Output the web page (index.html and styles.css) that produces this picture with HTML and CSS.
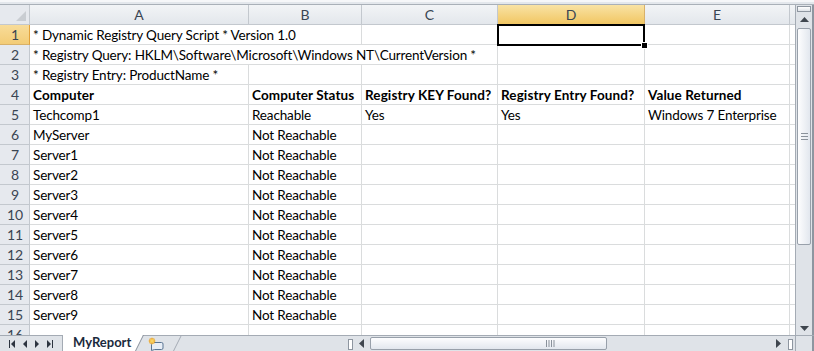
FILE: index.html
```html
<!DOCTYPE html>
<html lang="en">
<head>
    <meta charset="UTF-8">
    <title>MyReport</title>
    <link rel="stylesheet" href="styles.css">
</head>
<body>
    <div class="workbook">
        <div class="top-strip"></div>
        <div class="main">
            <div class="sheet">
                <div class="corner"><svg width="10" height="10" viewBox="0 0 10 10"><path d="M10 0 L10 10 L0 10 Z" fill="#c9cdd2"/></svg></div>
                <div class="col-head">A</div>
                <div class="col-head">B</div>
                <div class="col-head">C</div>
                <div class="col-head active">D</div>
                <div class="col-head">E</div>
                <div class="col-head last"></div>

                <div class="row-head active">1</div>
                <div class="cell span-2">* Dynamic Registry Query Script * Version 1.0</div>
                <div class="cell"></div>
                <div class="cell selected"><span class="sel-box"><span class="fill-handle"></span></span></div>
                <div class="cell"></div>
                <div class="cell last"></div>

                <div class="row-head">2</div>
                <div class="cell span-3">* Registry Query: HKLM\Software\Microsoft\Windows NT\CurrentVersion *</div>
                <div class="cell"></div>
                <div class="cell"></div>
                <div class="cell last"></div>

                <div class="row-head">3</div>
                <div class="cell">* Registry Entry: ProductName *</div>
                <div class="cell"></div>
                <div class="cell"></div>
                <div class="cell"></div>
                <div class="cell"></div>
                <div class="cell last"></div>

                <div class="row-head">4</div>
                <div class="cell bold">Computer</div>
                <div class="cell bold">Computer Status</div>
                <div class="cell bold">Registry KEY Found?</div>
                <div class="cell bold">Registry Entry Found?</div>
                <div class="cell bold">Value Returned</div>
                <div class="cell last"></div>

                <div class="row-head">5</div>
                <div class="cell">Techcomp1</div>
                <div class="cell">Reachable</div>
                <div class="cell">Yes</div>
                <div class="cell">Yes</div>
                <div class="cell">Windows 7 Enterprise</div>
                <div class="cell last"></div>

                <div class="row-head">6</div>
                <div class="cell">MyServer</div>
                <div class="cell">Not Reachable</div>
                <div class="cell"></div><div class="cell"></div><div class="cell"></div><div class="cell last"></div>

                <div class="row-head">7</div>
                <div class="cell">Server1</div>
                <div class="cell">Not Reachable</div>
                <div class="cell"></div><div class="cell"></div><div class="cell"></div><div class="cell last"></div>

                <div class="row-head">8</div>
                <div class="cell">Server2</div>
                <div class="cell">Not Reachable</div>
                <div class="cell"></div><div class="cell"></div><div class="cell"></div><div class="cell last"></div>

                <div class="row-head">9</div>
                <div class="cell">Server3</div>
                <div class="cell">Not Reachable</div>
                <div class="cell"></div><div class="cell"></div><div class="cell"></div><div class="cell last"></div>

                <div class="row-head">10</div>
                <div class="cell">Server4</div>
                <div class="cell">Not Reachable</div>
                <div class="cell"></div><div class="cell"></div><div class="cell"></div><div class="cell last"></div>

                <div class="row-head">11</div>
                <div class="cell">Server5</div>
                <div class="cell">Not Reachable</div>
                <div class="cell"></div><div class="cell"></div><div class="cell"></div><div class="cell last"></div>

                <div class="row-head">12</div>
                <div class="cell">Server6</div>
                <div class="cell">Not Reachable</div>
                <div class="cell"></div><div class="cell"></div><div class="cell"></div><div class="cell last"></div>

                <div class="row-head">13</div>
                <div class="cell">Server7</div>
                <div class="cell">Not Reachable</div>
                <div class="cell"></div><div class="cell"></div><div class="cell"></div><div class="cell last"></div>

                <div class="row-head">14</div>
                <div class="cell">Server8</div>
                <div class="cell">Not Reachable</div>
                <div class="cell"></div><div class="cell"></div><div class="cell"></div><div class="cell last"></div>

                <div class="row-head">15</div>
                <div class="cell">Server9</div>
                <div class="cell">Not Reachable</div>
                <div class="cell"></div><div class="cell"></div><div class="cell"></div><div class="cell last"></div>

                <div class="row-head">16</div>
                <div class="cell"></div><div class="cell"></div><div class="cell"></div><div class="cell"></div><div class="cell"></div><div class="cell last"></div>
            </div>

            <div class="vscroll">
                <div class="split-box"></div>
                <div class="arrow-btn"><svg width="9" height="5" viewBox="0 0 9 5"><path d="M0 5 L4.5 0 L9 5 Z" fill="#3f464e"/></svg></div>
                <div class="vthumb">
                    <svg width="7" height="7" viewBox="0 0 7 7"><path d="M0 .5h7M0 3.5h7M0 6.5h7" stroke="#8a929b" stroke-width="1"/></svg>
                </div>
                <div class="vtrack"></div>
                <div class="arrow-btn"><svg width="9" height="5" viewBox="0 0 9 5"><path d="M0 0 L4.5 5 L9 0 Z" fill="#3f464e"/></svg></div>
            </div>
        </div>

        <div class="tab-bar">
            <div class="nav-buttons">
                <svg width="6" height="8" viewBox="0 0 6 8"><path d="M0 0h1v8H0z M6 0 L2 4 L6 8 Z" fill="#2d3540"/></svg>
                <svg width="4" height="8" viewBox="0 0 4 8"><path d="M4 0 L0 4 L4 8 Z" fill="#2d3540"/></svg>
                <svg width="4" height="8" viewBox="0 0 4 8"><path d="M0 0 L4 4 L0 8 Z" fill="#2d3540"/></svg>
                <svg width="6" height="8" viewBox="0 0 6 8"><path d="M5 0h1v8H5z M0 0 L4 4 L0 8 Z" fill="#2d3540"/></svg>
            </div>
            <div class="sheet-tab">MyReport</div>
            <svg class="tab-slant" width="10" height="16" viewBox="0 0 10 16"><path d="M0 0 H9 L1 16 H0 Z" fill="#fff"/><path d="M9.5 0 L1.5 16" stroke="#8c949e" fill="none"/></svg>
            <div class="new-tab">
                <svg width="16" height="14" viewBox="0 0 16 14">
                    <path d="M4.5 5.5 h9 a1.5 1.5 0 0 1 1.5 1.5 v4 a1.5 1.5 0 0 1 -1.5 1.5 h-7 l-3 1 v-6.5 z" fill="#e8eef6" stroke="#5b7694"/>
                    <circle cx="4" cy="4" r="2.6" fill="#f6c342" stroke="#e08a1e" stroke-width=".8"/>
                    <path d="M4 0v8M0 4h8M1.3 1.3l5.4 5.4M6.7 1.3L1.3 6.7" stroke="#f7d36b" stroke-width=".7"/>
                </svg>
            </div>
            <svg class="tab-slant" width="10" height="16" viewBox="0 0 10 16"><path d="M9.5 0 L1.5 16" stroke="#a4abb4" fill="none"/></svg>
            <div class="tab-fill"></div>
            <div class="hsplit"></div>
            <div class="h-arrow"><svg width="5" height="9" viewBox="0 0 5 9"><path d="M5 0 L0 4.5 L5 9 Z" fill="#3f464e"/></svg></div>
            <div class="hthumb">
                <svg width="9" height="7" viewBox="0 0 9 7"><path d="M.5 0v7M3 0v7M5.5 0v7M8 0v7" stroke="#8a929b" stroke-width="1"/></svg>
            </div>
            <div class="htrack"></div>
            <div class="h-arrow"><svg width="5" height="9" viewBox="0 0 5 9"><path d="M0 0 L5 4.5 L0 9 Z" fill="#3f464e"/></svg></div>
            <div class="hsplit end"></div>
            <div class="scroll-corner"></div>
        </div>
    </div>
</body>
</html>
```
FILE: styles.css
```css
* {
    box-sizing: border-box;
}
body {
    margin: 0;
    font-family: Lato, "Open Sans", sans-serif;
    background: #fff;
}
.workbook {
    width: 814px;
    height: 351px;
    display: flex;
    flex-direction: column;
    overflow: hidden;
    background: #dfe3e8;
}
.top-strip {
    height: 5px;
    flex: none;
    background: #e3e7ec;
    border-top: 2px solid #f6f7f9;
    border-bottom: 1px solid #a9b0b8;
}
.main {
    height: 330px;
    flex: none;
    display: flex;
}
.sheet {
    width: 795px;
    height: 330px;
    overflow: hidden;
    display: grid;
    grid-template-columns: 30px 219px 113px 136px 147px 145px 5px;
    grid-auto-rows: 20px;
    background: #fff;
    font-size: 13.5px;
    letter-spacing: -0.15px;
    color: #000;
}
.corner {
    background: #e6e9ee;
    border-right: 1px solid #c3c8ce;
    border-bottom: 1px solid #c3c8ce;
    display: flex;
    align-items: flex-end;
    justify-content: flex-end;
    padding: 0 3px 3px 0;
}
.col-head {
    background: linear-gradient(#f2f4f6, #e3e7ec);
    border-right: 1px solid #c3c8ce;
    border-bottom: 1px solid #c3c8ce;
    text-align: center;
    line-height: 19px;
    font-size: 14px;
    letter-spacing: 0;
    color: #3a4552;
}
.col-head.active {
    background: linear-gradient(#f9e3a4, #f1c663);
    border-bottom: 1px solid #e2a13a;
    border-right-color: #d8b16a;
}
.col-head.last {
    border-right: none;
}
.row-head {
    background: #e6e9ee;
    border-right: 1px solid #c3c8ce;
    border-bottom: 1px solid #c3c8ce;
    text-align: center;
    line-height: 20px;
    font-size: 14px;
    letter-spacing: 0;
    color: #3a4552;
    padding-left: 1px;
}
.row-head.active {
    background: linear-gradient(#f8dc99, #f3cc76);
    border-right: 1px solid #e2a13a;
    border-bottom-color: #d8b16a;
}
.cell {
    border-right: 1px solid #dadcdd;
    border-bottom: 1px solid #dadcdd;
    padding-left: 3px;
    line-height: 20px;
    white-space: nowrap;
    overflow: hidden;
}
.cell.last {
    border-right: none;
}
.cell.bold {
    font-weight: bold;
    letter-spacing: 0.1px;
}
.span-2 {
    grid-column: span 2;
}
.span-3 {
    grid-column: span 3;
}
.cell.selected {
    position: relative;
    overflow: visible;
}
.sel-box {
    position: absolute;
    top: -1px;
    left: -1px;
    right: -1px;
    bottom: -2px;
    border: 2px solid #000;
    z-index: 2;
}
.fill-handle {
    position: absolute;
    right: -5px;
    bottom: -5px;
    width: 7px;
    height: 7px;
    background: #000;
    border: 1px solid #fff;
}

/* vertical scroll bar */
.vscroll {
    width: 19px;
    flex: none;
    display: flex;
    flex-direction: column;
    align-items: center;
    background: #dfe3e8;
    border-left: 1px solid #a4abb4;
    border-right: 2px solid #8e96a0;
}
.split-box {
    width: 14px;
    height: 6px;
    margin-top: 1px;
    border: 1px solid #8e96a0;
    background: linear-gradient(#fff, #dfe3e8);
    flex: none;
}
.arrow-btn {
    height: 14px;
    width: 100%;
    flex: none;
    display: flex;
    align-items: center;
    justify-content: center;
}
.vthumb {
    height: 217px;
    width: 14px;
    flex: none;
    margin-top: 2px;
    border: 1px solid #98a0aa;
    border-radius: 2px;
    background: linear-gradient(90deg, #fdfdfe, #e2e7ee);
    display: flex;
    align-items: center;
    justify-content: center;
}
.vtrack {
    flex: 1;
}

/* sheet tabs + horizontal scroll bar */
.tab-bar {
    height: 16px;
    flex: none;
    display: flex;
    align-items: stretch;
    border-top: 1px solid #a4abb4;
    background: #dfe3e8;
    font-size: 13px;
}
.nav-buttons {
    width: 63px;
    flex: none;
    display: flex;
    align-items: center;
    gap: 8px;
    padding-left: 9px;
    border-right: 1px solid #a4abb4;
}
.sheet-tab {
    background: #fff;
    font-weight: bold;
    color: #1b2a3d;
    line-height: 15px;
    padding: 0 3px 0 10px;
    margin-top: -1px;
}
.tab-slant {
    flex: none;
    margin-top: -1px;
}
.new-tab {
    display: flex;
    align-items: center;
    padding-left: 4px;
    width: 28px;
}
.tab-fill {
    flex: 1;
}
.hsplit {
    width: 5px;
    margin: 3px 2px 1px 1px;
    border: 1px solid #8e96a0;
    background: #fff;
    flex: none;
}
.hsplit.end {
    margin: 3px 2px 1px 3px;
}
.h-arrow {
    width: 14px;
    flex: none;
    display: flex;
    align-items: center;
    justify-content: center;
}
.hthumb {
    width: 237px;
    flex: none;
    margin: 1px 0 1px 1px;
    border: 1px solid #98a0aa;
    border-radius: 2px;
    background: linear-gradient(#fdfdfe, #e2e7ee);
    display: flex;
    align-items: center;
    justify-content: center;
    padding-left: 124px;
}
.htrack {
    flex: 1;
}
.scroll-corner {
    width: 19px;
    flex: none;
    border-left: 1px solid #a4abb4;
    border-right: 2px solid #8e96a0;
}
```
